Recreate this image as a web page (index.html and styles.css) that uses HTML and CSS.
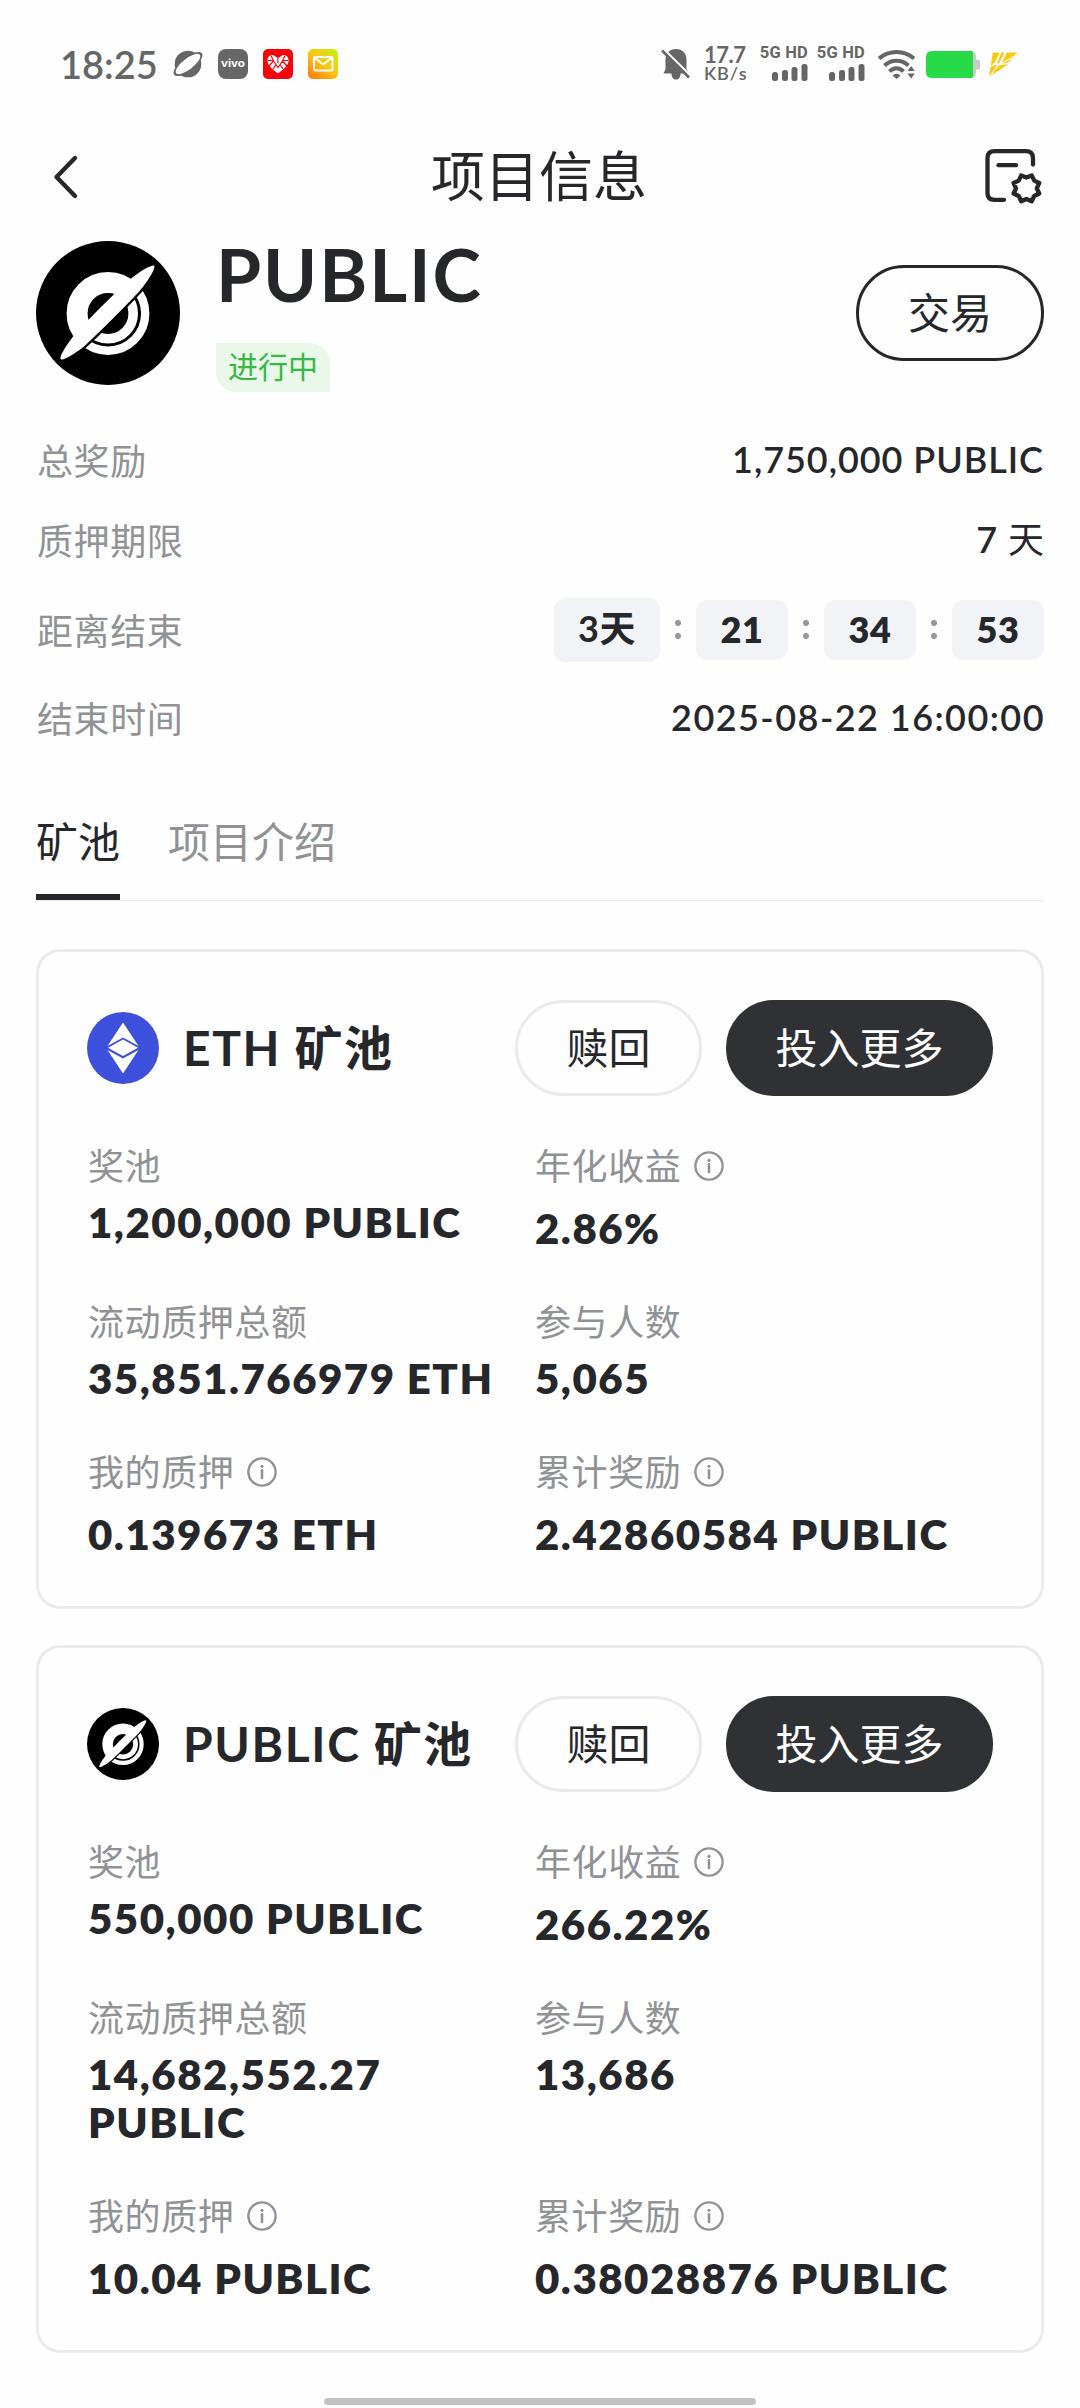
FILE: index.html
```html
<!DOCTYPE html>
<html lang="zh-CN">
<head>
<meta charset="utf-8">
<title>项目信息</title>
<link rel="stylesheet" href="styles.css">
</head>
<body>
<svg class="defs" aria-hidden="true">
  <symbol id="public-logo" viewBox="0 0 144 144">
    <circle cx="72" cy="72" r="72" fill="#000"/>
    <circle cx="72" cy="72.5" r="30.9" fill="none" stroke="#fff" stroke-width="21"/>
    <path d="M94.3 50.2A31.4 31.4 0 0 1 49.7 94.8" fill="none" stroke="#000" stroke-width="3"/>
    <g transform="translate(71.5 71.5) rotate(-45)">
      <path d="M-52 9C-30 11 30 11 52 9L40 0H-40Z" fill="#000"/>
      <path d="M-66 0C-66-3-48-7-38-7.5C-15-8.7 15-8.7 38-7.5C48-7 66-3 66 0C66 3 48 7 38 7.5C15 8.2-15 8.2-38 7.5C-48 7-66 3-66 0Z" fill="#fff"/>
    </g>
  </symbol>
  <symbol id="info" viewBox="0 0 30 30">
    <circle cx="15" cy="15" r="13.6" fill="none" stroke="#919398" stroke-width="2.4"/>
    <circle cx="15" cy="9.3" r="1.6" fill="#919398"/>
    <path d="M15 13.2V21" stroke="#919398" stroke-width="2.6" stroke-linecap="round"/>
  </symbol>
  <symbol id="signal" viewBox="0 0 36 17">
    <g fill="#666"><rect x="0" y="8" width="6" height="9" rx="2.5"/><rect x="10" y="6" width="6" height="11" rx="2.5"/><rect x="19.500" y="3" width="6" height="14" rx="2.500"/><rect x="29.500" y="0" width="6" height="17" rx="2.500"/></g>
  </symbol>
</svg>

<header class="status">
  <span class="clock">18:25</span>
  <svg class="planet" viewBox="0 0 30 28"><circle cx="15" cy="14" r="13.300" fill="#666"/><g transform="translate(15 14) rotate(-38)"><ellipse rx="17.500" ry="6.800" fill="#666"/><ellipse rx="15" ry="5.400" fill="#fff"/></g></svg>
  <svg class="app" viewBox="0 0 30 30"><rect width="30" height="30" rx="8" fill="#666"/><text x="15" y="18" text-anchor="middle" textLength="24" lengthAdjust="spacingAndGlyphs" class="vivo">vivo</text></svg>
  <svg class="app" viewBox="0 0 30 30"><rect width="30" height="30" rx="5" fill="#f5040a"/><path d="M15 24.500C9 20 4.500 16.500 4.500 11.500C4.500 7 7.500 5.800 10 6L14 8.500H16L20 6C22.500 5.800 25.500 7 25.500 11.500C25.500 16.500 21 20 15 24.500Z" fill="#fff"/><path d="M8 6.500L10.500 12L6 17M10.500 12L15 18.500L19.500 12L22 6.500M19.500 12L24 17M5 11.500H10.500M19.500 11.500H25M14.900 8V14M10 20L13 15.500M20 20L17 15.500" fill="none" stroke="#f5040a" stroke-width="1.200"/></svg>
  <svg class="app" viewBox="0 0 30 30"><defs><linearGradient id="mail" x1=".1" y1="1" x2=".9" y2="0"><stop offset="0" stop-color="#ff7a0c"/><stop offset=".5" stop-color="#ffc414"/><stop offset="1" stop-color="#c8f018"/></linearGradient></defs><rect width="30" height="30" rx="5" fill="url(#mail)"/><rect x="6" y="8" width="18.500" height="13.500" rx="1.500" fill="none" stroke="#fff" stroke-width="2"/><path d="M7 9L15.200 15.500L23.500 9" fill="none" stroke="#fff" stroke-width="2"/></svg>
  <div class="status-right">
    <svg class="bell" viewBox="0 0 28 31"><path d="M14 0C20.500 0 24.500 4.500 24.500 10.500V20L27 24.500H18.500C18.500 28.500 16.500 30.500 14 30.500S9.500 28.500 9.500 24.500H1.500L3.500 20V10.500C3.500 4.500 7.500 0 14 0Z" fill="#666"/><path d="M1.500 0L29 27" stroke="#fefefe" stroke-width="2.400"/><path d="M0 1.500L27 28.500" stroke="#666" stroke-width="2.600"/></svg>
    <div class="speed"><b>17.7</b><span>KB/s</span></div>
    <div class="sim"><b>5G HD</b><svg viewBox="0 0 36 17"><use href="#signal"/></svg></div>
    <div class="sim"><b>5G HD</b><svg viewBox="0 0 36 17"><use href="#signal"/></svg></div>
    <svg class="wifi" viewBox="0 0 38 29"><g fill="none" stroke="#666" stroke-width="4"><path d="M1 8.500C11-.2 26-.2 36 8.500"/><path d="M6.500 15.500C13.500 9 23.500 9 30.500 15.500"/><path d="M11.500 21.500C15.500 17 21.500 17 25.500 21.500"/></g><path d="M14.500 25.500Q18.500 22 22.500 25.500L18.500 29Z" fill="#666"/><path d="M29.500 21L33.200 16L36.800 21ZM29.500 23.500H36.800L33.200 28.500Z" fill="#666"/></svg>
    <svg class="battery" viewBox="0 0 54 27"><path d="M40 0H44Q50 0 50 6V8.500H51Q54 8.500 54 11V16Q54 18.500 51 18.500H50V21Q50 27 44 27H40Z" fill="#c9c9c9"/><path d="M6 0H46Q47 1 47 3V24Q47 26 46 27H6Q0 27 0 21V6Q0 0 6 0Z" fill="#27da48"/></svg>
    <svg class="bolt" viewBox="0 0 30 25"><path d="M4 0H11L6 10.500L1.800 14ZM13 0H16L10.500 11L8 12ZM18.500 0H29.500L26 3.500L13 11ZM26 5L19.500 10.500L13 12ZM1.500 15L8 12.500L7 15.500L0 25ZM10 13.500L20 12L13 17L2 24Z" fill="#fbc80d"/></svg>
  </div>
</header>

<nav class="nav">
  <svg class="back" viewBox="0 0 26 46"><path d="M22 4L3.500 23L22 42" fill="none" stroke="#26272b" stroke-width="4.400" stroke-linecap="round" stroke-linejoin="round"/></svg>
  <h1>项目信息</h1>
  <svg class="records" viewBox="0 0 60 60"><g fill="none" stroke="#26272b" stroke-width="4.300" stroke-linecap="round" stroke-linejoin="round"><path d="M50 17.500V11Q50 4.200 43 4.200H11.500Q4.500 4.200 4.500 11V46Q4.500 52.800 11.500 52.800H21"/><path d="M15.500 18.200H33"/><path d="M53.800 41.300L56.200 46.500L51.200 49L48.700 54.200L43.400 52L38.200 54.200L35.700 49L30.600 46.500L33 41.300L30.600 36L35.700 33.600L38.200 28.400L43.400 30.600L48.700 28.400L51.200 33.600L56.200 36Z"/></g></svg>
</nav>

<main>
  <section class="project">
    <svg class="project-logo"><use href="#public-logo"/></svg>
    <div class="project-name"><h2>PUBLIC</h2><span class="badge">进行中</span></div>
    <button class="btn trade">交易</button>
  </section>

  <dl class="facts">
    <div class="fact"><dt>总奖励</dt><dd>1,750,000 PUBLIC</dd></div>
    <div class="fact"><dt>质押期限</dt><dd>7 <span class="unit">天</span></dd></div>
    <div class="fact countdown"><dt>距离结束</dt><dd><b class="days">3天</b><i></i><b>21</b><i></i><b>34</b><i></i><b>53</b></dd></div>
    <div class="fact"><dt>结束时间</dt><dd class="date">2025-08-22 16:00:00</dd></div>
  </dl>

  <div class="tabs"><a class="tab active">矿池</a><a class="tab">项目介绍</a></div>

  <article class="pool">
    <header class="pool-head">
      <svg class="coin" viewBox="0 0 72 72"><circle cx="36" cy="36" r="36" fill="#3e4fdb"/><g fill="#fff"><path d="M36 10.500L51.500 34L36 25.500L20.500 34Z"/><path d="M36 27.500L51 35.800L36 44L21 35.800Z"/><path d="M20.500 38L36 46.500L51.500 38L36 61.500Z"/></g></svg>
      <h3>ETH 矿池</h3>
      <button class="btn redeem">赎回</button>
      <button class="btn more">投入更多</button>
    </header>
    <dl class="stats">
      <div><dt>奖池</dt><dd>1,200,000 PUBLIC</dd></div>
      <div class="hint"><dt>年化收益<svg><use href="#info"/></svg></dt><dd>2.86%</dd></div>
      <div><dt>流动质押总额</dt><dd>35,851.766979 ETH</dd></div>
      <div><dt>参与人数</dt><dd>5,065</dd></div>
      <div class="hint"><dt>我的质押<svg><use href="#info"/></svg></dt><dd>0.139673 ETH</dd></div>
      <div class="hint"><dt>累计奖励<svg><use href="#info"/></svg></dt><dd>2.42860584 PUBLIC</dd></div>
    </dl>
  </article>

  <article class="pool">
    <header class="pool-head">
      <svg class="coin"><use href="#public-logo"/></svg>
      <h3>PUBLIC 矿池</h3>
      <button class="btn redeem">赎回</button>
      <button class="btn more">投入更多</button>
    </header>
    <dl class="stats">
      <div><dt>奖池</dt><dd>550,000 PUBLIC</dd></div>
      <div class="hint"><dt>年化收益<svg><use href="#info"/></svg></dt><dd>266.22%</dd></div>
      <div><dt>流动质押总额</dt><dd>14,682,552.27 PUBLIC</dd></div>
      <div><dt>参与人数</dt><dd>13,686</dd></div>
      <div class="hint"><dt>我的质押<svg><use href="#info"/></svg></dt><dd>10.04 PUBLIC</dd></div>
      <div class="hint"><dt>累计奖励<svg><use href="#info"/></svg></dt><dd>0.38028876 PUBLIC</dd></div>
    </dl>
  </article>
</main>
<div class="home-bar"></div>
</body>
</html>
```
FILE: styles.css
```css
* { box-sizing: border-box; margin: 0; padding: 0; }
body {
  width: 1080px;
  height: 2408px;
  overflow: hidden;
  display: flex;
  flex-direction: column;
  background: #fefefe;
  color: #26272b;
  font-family: Lato, "Noto Sans CJK SC", sans-serif;
  font-kerning: none;
}
svg { display: block; flex: none; overflow: visible; }
.defs { position: absolute; width: 0; height: 0; }

/* status bar */
.status { height: 128px; padding: 0 62px 0 60px; display: flex; align-items: center; color: #666; }
.clock { width: 113px; font-size: 38px; font-weight: 600; line-height: 40px; }
.planet { width: 30px; height: 28px; margin-right: 15px; }
.app { width: 30px; height: 30px; margin-right: 15px; }
.vivo { font: 700 10px Inter, sans-serif; fill: #fff; }
.status-right { flex: 1; display: flex; align-items: center; justify-content: flex-end; }
.bell { width: 28px; height: 31px; margin-right: 14px; }
.speed { width: 45px; margin-right: 11px; display: flex; flex-direction: column; white-space: nowrap; }
.speed b { font-size: 22px; line-height: 19px; font-weight: 700; letter-spacing: -.5px; }
.speed span { font-size: 18px; line-height: 19px; font-weight: 600; letter-spacing: .9px; }
.sim { width: 48px; margin-right: 9px; display: flex; flex-direction: column; align-items: flex-end; gap: 5px; white-space: nowrap; }
.sim b { font: 700 16.5px/12px Roboto, sans-serif; letter-spacing: .2px; }
.sim svg { width: 36px; height: 17px; }
.wifi { width: 38px; height: 29px; margin: 0 10px 0 4px; }
.battery { width: 54px; height: 27px; margin-right: 9px; }
.bolt { width: 29px; height: 25px; }

/* page title */
.nav { height: 98px; padding: 0 37px 0 53px; display: flex; align-items: center; justify-content: space-between; }
.nav h1 { font-size: 54px; line-height: 64px; font-weight: 400; }
.back { width: 26px; height: 46px; margin-right: 16px; }
.records { width: 60px; height: 60px; }

main { padding: 15px 36px 0; }

/* project summary */
.project { display: flex; align-items: center; height: 144px; }
.project-logo { width: 144px; height: 144px; }
.project-name { flex: 1; align-self: flex-start; margin: -10px 0 0 36px; display: flex; flex-direction: column; align-items: flex-start; }
.project-name h2 { font-size: 73px; line-height: 86px; font-weight: 700; letter-spacing: 1.9px; }
.badge { margin-top: 26px; width: 114px; height: 49px; font-size: 30px; line-height: 47px; text-align: center; color: #36b844; background: #e9f8e9; border-radius: 0 20px 0 20px; }
.btn { height: 96px; border-radius: 48px; border: 3px solid #e9eaea; background: transparent; color: #26272b; font-family: inherit; font-size: 42px; line-height: 88px; white-space: nowrap; flex: none; }
.trade { width: 188px; border-color: #26272b; line-height: 90px; }

.facts { padding-top: 36px; }
.fact { display: flex; align-items: center; justify-content: space-between; height: 80px; }
.fact dt, .stats dt { color: #909296; font-size: 36px; line-height: 48px; letter-spacing: .6px; padding-left: 1px; }
.fact dd { font-size: 36px; line-height: 48px; font-weight: 600; letter-spacing: .95px; margin: -4px 0 0; }
.fact dd .unit { font-weight: 400; letter-spacing: 0; }
.fact dd.date { letter-spacing: 1.45px; margin-right: -1px; }
.countdown { height: 100px; }
.countdown dd { display: flex; align-items: center; letter-spacing: .5px; margin: -2px 0 0; }
.countdown b { width: 92px; height: 60px; border-radius: 12px; background: #f1f3f7; text-align: center; line-height: 59px; font-weight: 800; }
.countdown .days { width: 106px; height: 64px; line-height: 60px; font-weight: 700; }
.countdown i { width: 36px; height: 20px; display: flex; background: radial-gradient(circle at 18px 3px, #96979a 2.6px, transparent 3.4px), radial-gradient(circle at 18px 16px, #96979a 2.6px, transparent 3.4px); }
.fact:last-child { height: 76px; }

.tabs { margin-top: 43px; height: 101px; display: flex; gap: 48px; border-bottom: 1px solid #e8e9ea; }
.tab { height: 100px; font-size: 42px; line-height: 84px; color: #909296; }
.tab.active { color: #26272b; border-bottom: 6px solid #26272b; }

/* pool cards */
.pool { border: 3px solid #ebebec; border-radius: 24px; padding: 48px; margin-bottom: 36px; }
.tabs + .pool { margin-top: 48px; }
.pool-head { display: flex; align-items: center; gap: 24px; height: 96px; }
.coin { width: 72px; height: 72px; }
.pool-head h3 { flex: 1; font-size: 48px; line-height: 60px; font-weight: 700; white-space: nowrap; letter-spacing: 1.6px; margin-right: -30px; }
.redeem { width: 187px; }
.more { width: 267px; background: #303135; border-color: #303135; color: #fff; }
.stats { margin-top: 46px; display: grid; grid-template-columns: 447px 1fr; row-gap: 46px; }
.stats > div { display: flex; flex-direction: column; gap: 8px; }
.stats > .hint { gap: 14px; }
.stats dt { display: flex; align-items: center; gap: 13px; height: 48px; }
.stats dt svg { width: 30px; height: 30px; }
.stats dd { font-size: 42px; line-height: 48px; font-weight: 800; letter-spacing: 1.5px; padding-left: 1px; }

.home-bar { position: absolute; left: 324px; top: 2398px; width: 432px; height: 7px; border-radius: 4px; background: #c1c1c1; }
```
